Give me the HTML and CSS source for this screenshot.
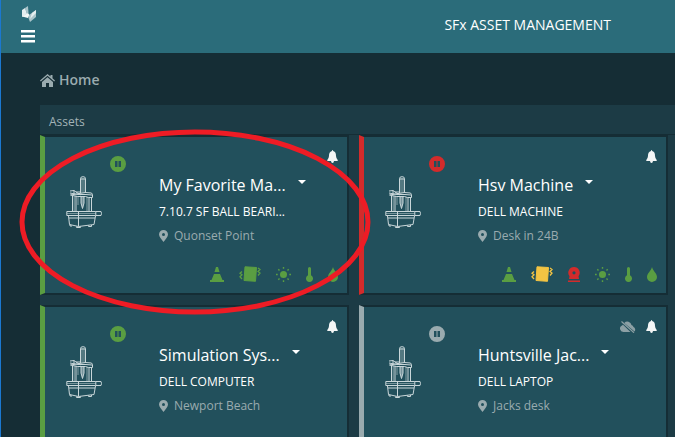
FILE: index.html
```html
<!DOCTYPE html>
<html lang="en">
<head>
<meta charset="utf-8">
<meta name="viewport" content="width=device-width, initial-scale=1">
<title>SFx Asset Management</title>
<link rel="stylesheet" href="styles.css">
</head>
<body>
<svg class="sprite" aria-hidden="true">
  <symbol id="machine" viewBox="0 0 36 52">
    <g fill="none" stroke="currentColor" stroke-width="1" stroke-linejoin="round">
      <path d="M14.500 17V2.500Q14.500.7 17 .7T19.500 2.500V17M14.500 3h5"/>
      <path stroke-width=".6" d="M16 2v15M18 2v15"/>
      <path d="M4 15l4-.5 2 1.500h4.500M19.500 16.500l6 .5 1 1.500v3h-4l-3-1h-8l-7-1.500zM4 17l8 1.500h8l6 .5M8 14.500v4M10 16l5 3"/>
      <path d="M6.500 19.500V35M10 20v15M23 21.500V35M25.500 21.500V35"/>
      <path stroke-width=".6" d="M8.200 20v15M21 21v14M12 20v9"/>
      <path fill="currentColor" fill-opacity=".5" d="M15 20v7l1.500 5.500 1.500-5.500v-6"/>
      <path d="M.8 35.500h29v4H.8zM30 35.500h5q1 2 0 4h-5M12.500 35.500v4"/>
      <path stroke-width=".5" d="M1 37.500h29"/>
      <path d="M2.500 40l1 8.500 9 2 15.500-2 1.500-8.500M12.500 40v10.500M3 42h26M10.500 50.500v1h4v-1M22.500 49.500v1h3v-1.500M4 48.500v1.500h2"/>
    </g>
  </symbol>
  <symbol id="pause" viewBox="0 0 16 16"><path fill="currentColor" fill-rule="evenodd" d="M8 0a8 8 0 1 1 0 16A8 8 0 0 1 8 0M5 5v6h2.500V5zm3.500 0v6H11V5z"/></symbol>
  <symbol id="bell" viewBox="0 0 11 13"><path fill="currentColor" d="M5 1Q5 0 5.500 0T6.200 1C8.500 1.500 9 3.500 9 6q.2 2.500 1.700 4v1H.3v-1Q1.800 8.500 2 6c0-2.500.7-4.500 3-5M4 11h3Q6.800 13 5.500 13T4 11"/></symbol>
  <symbol id="cloud-off" viewBox="0 0 16 12"><path fill="currentColor" d="M3.500 11A3.400 3.400 0 0 1 2 4.500L3 3.800 10.500 11zM4.300 2A4.200 4.200 0 0 1 11.500 4 3 3 0 0 1 13.500 6 2.900 2.900 0 0 1 14.500 10.500z"/><path stroke="currentColor" stroke-width="1.200" d="M1.500.5l12.500 11.200"/></symbol>
  <symbol id="pin" viewBox="0 0 9 12"><path fill="currentColor" fill-rule="evenodd" d="M4.500 0A4.500 4.500 0 0 1 9 4.500C9 7 6.500 9 4.500 12 2.500 9 0 7 0 4.500A4.500 4.500 0 0 1 4.500 0m0 3a1.500 1.500 0 1 0 0 3 1.500 1.500 0 0 0 0-3"/></symbol>
  <symbol id="cone" viewBox="0 0 14 15"><path fill="currentColor" d="M6 0h2l1.500 5h-5zM4 7h6l2.500 6H14v2H0v-2h1.500z"/></symbol>
  <symbol id="vibration" viewBox="0 0 22 16"><path fill="currentColor" d="M6 .8L17.500 1.500 16.500 15.300 5 14.500z" stroke="currentColor" stroke-linejoin="round"/><path fill="none" stroke="currentColor" stroke-width="1.300" d="M3 5.500L1 7.300l2 1.500-2 2L3 13M19 2l2 1.500L19 5.500 21 7l-2 2.500"/></symbol>
  <symbol id="sun" viewBox="0 0 15 15"><circle cx="7.500" cy="7.500" r="3.500" fill="currentColor"/><path stroke="currentColor" stroke-width="1.400" d="M7.500 0v1.700M7.500 13.300V15M0 7.500h1.700M13.300 7.500H15M2.300 2.300l1.200 1.200M11.500 11.500l1.200 1.200M2.300 12.700l1.200-1.200M11.500 3.500l1.200-1.200"/></symbol>
  <symbol id="thermometer" viewBox="0 0 7 15"><path fill="currentColor" d="M2 1.500a1.500 1.500 0 0 1 3 0V8.300a3.500 3.500 0 1 1-3 0z"/></symbol>
  <symbol id="drop" viewBox="0 0 10 15"><path fill="currentColor" d="M5 0C6 4 10 6.500 10 10A5 5 0 0 1 0 10C0 6.500 4 4 5 0"/></symbol>
  <symbol id="siren" viewBox="0 0 12 15"><path fill="currentColor" fill-rule="evenodd" d="M6 0a5.700 5.700 0 0 1 4.500 9.200L11 12H1l.5-2.800A5.700 5.700 0 0 1 6 0m0 4.200a1.600 1.600 0 1 0 0 3.200 1.600 1.600 0 0 0 0-3.200M0 13.500h12V15H0z"/></symbol>
  <symbol id="home" viewBox="0 0 15 13"><path fill="currentColor" d="M7.500 0L10.500 2.600V1h2v3.300L15 6.500l-.8 1L7.500 1.800.8 7.500 0 6.500z"/><path fill="currentColor" d="M7.500 3.200L13 7.900V13H9V9H6v4H2V7.900z"/></symbol>
  <symbol id="caret" viewBox="0 0 8 4"><path fill="currentColor" d="M0 0h8L4 4z"/></symbol>
</svg>

<header class="topbar">
  <div class="topbar-nav">
    <svg class="logo" viewBox="0 0 14 16" role="img" aria-label="SFx">
      <path fill="#a9c4ca" d="M3 2l3-2 .5 7L5 8z"/>
      <path fill="#e4edef" d="M0 4l3-2 2 6-5 3z"/>
      <path fill="#f4f8f8" d="M0 10.500L6 7l1.500 2-1.500 3z"/>
      <path fill="#a9c4ca" d="M7 9l7-5v7l-6 5-1.500-4z"/>
      <path fill="#e4edef" d="M10 7L14 4v3l-6 6z"/>
    </svg>
    <button class="menu" type="button" aria-label="Menu">
      <svg viewBox="0 0 14 13"><path fill="currentColor" d="M0 0h14v2.500H0zM0 5h14v2.500H0zM0 10h14v2.500H0z"/></svg>
    </button>
  </div>
  <div class="app-name">SFx ASSET MANAGEMENT</div>
</header>

<main class="page">
  <h1 class="crumb"><svg class="i-home"><use href="#home"/></svg>Home</h1>
  <section class="panel">
    <h2 class="panel-title">Assets</h2>
    <div class="cards">
      <article class="card ok">
        <div class="visual"><svg class="i-pause"><use href="#pause"/></svg><svg class="i-machine"><use href="#machine"/></svg></div>
        <div class="info">
          <div class="alerts"><svg class="i-bell"><use href="#bell"/></svg></div>
          <h3 class="name">My Favorite Ma...<button type="button" aria-label="Asset menu"><svg class="i-caret"><use href="#caret"/></svg></button></h3>
          <p class="model">7.10.7 SF BALL BEARI...</p>
          <p class="place"><svg class="i-pin"><use href="#pin"/></svg>Quonset Point</p>
          <div class="sensors">
            <svg class="i-cone"><use href="#cone"/></svg>
            <svg class="i-vibration"><use href="#vibration"/></svg>
            <svg class="i-sun"><use href="#sun"/></svg>
            <svg class="i-thermometer"><use href="#thermometer"/></svg>
            <svg class="i-drop"><use href="#drop"/></svg>
          </div>
        </div>
      </article>
      <article class="card fault">
        <div class="visual"><svg class="i-pause"><use href="#pause"/></svg><svg class="i-machine"><use href="#machine"/></svg></div>
        <div class="info">
          <div class="alerts"><svg class="i-bell"><use href="#bell"/></svg></div>
          <h3 class="name">Hsv Machine<button type="button" aria-label="Asset menu"><svg class="i-caret"><use href="#caret"/></svg></button></h3>
          <p class="model">DELL MACHINE</p>
          <p class="place"><svg class="i-pin"><use href="#pin"/></svg>Desk in 24B</p>
          <div class="sensors">
            <svg class="i-cone"><use href="#cone"/></svg>
            <svg class="i-vibration warn"><use href="#vibration"/></svg>
            <svg class="i-siren alarm"><use href="#siren"/></svg>
            <svg class="i-sun"><use href="#sun"/></svg>
            <svg class="i-thermometer"><use href="#thermometer"/></svg>
            <svg class="i-drop"><use href="#drop"/></svg>
          </div>
        </div>
      </article>
      <article class="card ok">
        <div class="visual"><svg class="i-pause"><use href="#pause"/></svg><svg class="i-machine"><use href="#machine"/></svg></div>
        <div class="info">
          <div class="alerts"><svg class="i-bell"><use href="#bell"/></svg></div>
          <h3 class="name">Simulation Sys...<button type="button" aria-label="Asset menu"><svg class="i-caret"><use href="#caret"/></svg></button></h3>
          <p class="model">DELL COMPUTER</p>
          <p class="place"><svg class="i-pin"><use href="#pin"/></svg>Newport Beach</p>
        </div>
      </article>
      <article class="card offline">
        <div class="visual"><svg class="i-pause"><use href="#pause"/></svg><svg class="i-machine"><use href="#machine"/></svg></div>
        <div class="info">
          <div class="alerts"><svg class="i-cloud"><use href="#cloud-off"/></svg><svg class="i-bell"><use href="#bell"/></svg></div>
          <h3 class="name">Huntsville Jac...<button type="button" aria-label="Asset menu"><svg class="i-caret"><use href="#caret"/></svg></button></h3>
          <p class="model">DELL LAPTOP</p>
          <p class="place"><svg class="i-pin"><use href="#pin"/></svg>Jacks desk</p>
        </div>
      </article>
    </div>
  </section>
</main>
<svg class="highlight" viewBox="0 0 352 186" aria-hidden="true"><ellipse cx="176" cy="93" rx="173" ry="90" fill="none" stroke="#ee1c25" stroke-width="5"/></svg>
</body>
</html>
```
FILE: styles.css
```css
* { box-sizing: border-box; }

:root {
  --green: #5a9e42;
  --red: #d32b2b;
  --grey: #9aabaf;
  --dark: #152d35;
}

body {
  margin: 0;
  position: relative;
  display: flex;
  flex-direction: column;
  height: 100vh;
  overflow: hidden;
  background: var(--dark);
  border-left: 1px solid #1b78d0;
  color: #fff;
  font-family: "Open Sans", "Noto Sans", sans-serif;
}

h1, h2, h3, p { margin: 0; font-weight: 400; }
svg { display: block; flex: none; }
button { padding: 0; border: 0; background: none; color: inherit; }
.sprite { position: absolute; width: 0; height: 0; }

.topbar {
  display: flex;
  justify-content: space-between;
  flex: none;
  padding: 6px 64px 10px 20px;
  background: #2b6c7a;
}
.topbar-nav { display: flex; flex-direction: column; gap: 8px; }
.logo { width: 14px; height: 16px; margin-left: 1px; }
.menu svg { width: 14px; height: 13px; }
.app-name { padding-top: 8px; font-size: 14px; line-height: 22px; }

.page { flex: 1; min-height: 0; padding: 16px 0 0 39px; overflow: hidden; }
.crumb {
  display: flex;
  align-items: center;
  gap: 4px;
  margin-bottom: 14px;
  color: var(--grey);
  font-size: 14px;
  font-weight: 600;
  line-height: 22px;
}
.i-home { width: 15px; height: 13px; }

.panel { background: #1c3b45; }
.panel-title {
  padding: 8px 9px 3px;
  border-bottom: 1px solid var(--dark);
  color: #a3b3b7;
  font-size: 12px;
  line-height: 18px;
}
.cards {
  display: grid;
  grid-template-columns: 1fr 1fr;
  gap: 10px;
  padding-right: 7px;
}
.card {
  display: grid;
  grid-template-columns: 114px 1fr;
  min-height: 160px;
  border: 2px solid var(--dark);
  border-left: 5px solid var(--state);
  background: #22505c;
}
.ok { --state: var(--green); }
.fault { --state: var(--red); }
.offline { --state: var(--grey); }

.visual { padding: 19px 33px 0 21px; }
.i-pause { width: 16px; height: 16px; margin-left: 44px; color: var(--state); }
.i-machine { width: 36px; height: 52px; margin-top: 4px; color: #c9d6d9; }

.info { padding: 13px 9px 10px 0; }
.alerts { display: flex; justify-content: flex-end; align-items: center; gap: 10px; height: 13px; }
.i-bell { width: 11px; height: 13px; color: #f4f6f6; }
.i-cloud { width: 16px; height: 12px; color: #8da0a5; }
.name {
  display: flex;
  align-items: center;
  gap: 12px;
  margin-top: 10px;
  font-size: 16px;
  line-height: 24px;
}
.i-caret { width: 8px; height: 4px; margin-bottom: 6px; }
.model { margin-top: 6px; font-size: 12px; line-height: 18px; }
.place {
  display: flex;
  align-items: center;
  gap: 6px;
  margin-top: 6px;
  color: var(--grey);
  font-size: 12px;
  line-height: 18px;
}
.i-pin { width: 9px; height: 12px; }
.sensors {
  display: flex;
  justify-content: flex-end;
  align-items: center;
  gap: 15px;
  margin-top: 21px;
  color: var(--green);
}
.i-cone { width: 14px; height: 15px; }
.i-vibration { width: 22px; height: 16px; }
.i-siren { width: 12px; height: 15px; }
.i-sun { width: 15px; height: 15px; }
.i-thermometer { width: 7px; height: 15px; }
.i-drop { width: 10px; height: 15px; }
.warn { color: #f3c443; }
.alarm { color: var(--red); }

.highlight {
  position: absolute;
  top: 129px;
  left: 18px;
  width: 352px;
  height: 186px;
  pointer-events: none;
}
```
